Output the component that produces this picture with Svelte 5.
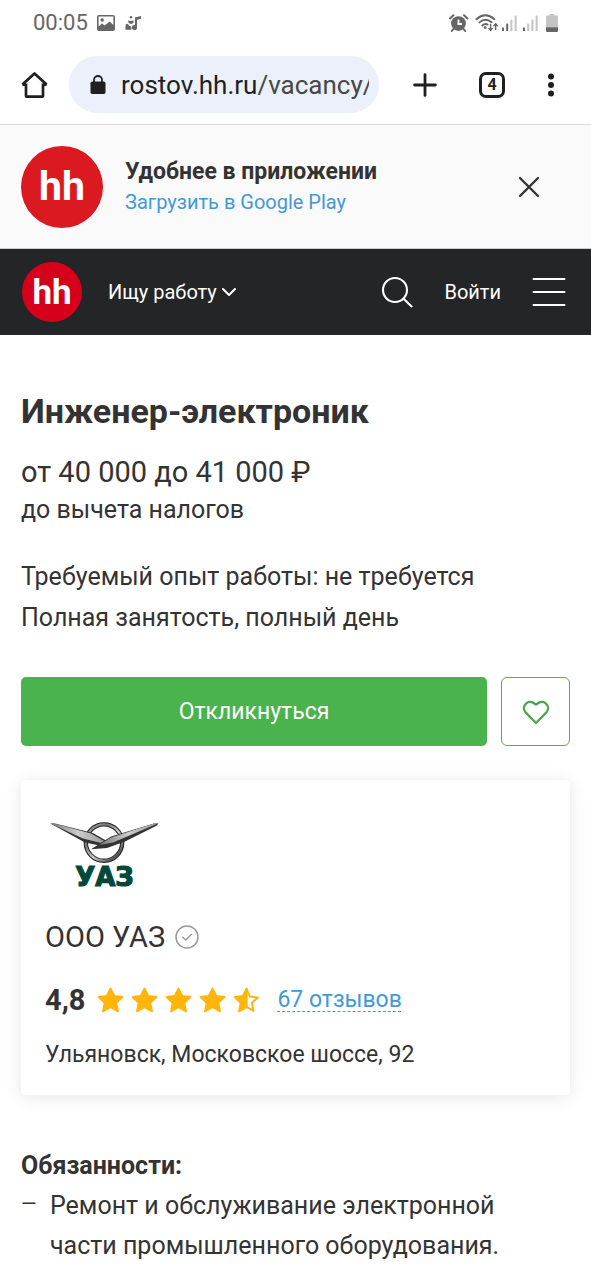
<script>
  const stars = [1, 1, 1, 1, 0.5];
  const signals = [
    ['#666', '#666', '#c4c4c4', '#c4c4c4'],
    ['#666', '#c4c4c4', '#c4c4c4', '#c4c4c4']
  ];
  let liked = $state(false);
  let bannerOpen = $state(true);
  const starPath =
    'M13 1.4 L16.8 9 L25 10 L18.9 15.8 L20.6 24.4 L13 20.2 L5.4 24.4 L7.1 15.8 L1 10 L9.2 9 Z';
</script>

<div class="page">
  <div class="status">
    <span class="time">00:05</span>
    <svg width="18" height="16" viewBox="0 0 18 16" aria-hidden="true">
      <path d="M2 0H16Q18 0 18 2V14Q18 16 16 16H2Q0 16 0 14V2Q0 0 2 0ZM1.6 1.6V11.5L5 8.6L7.6 10.6L12.6 6.6L16.4 10V1.6Z" fill="#666" fill-rule="evenodd" />
      <circle cx="5.2" cy="5" r="1.7" fill="#666" />
    </svg>
    <svg class="note" width="17" height="16" viewBox="0 0 17 16" aria-hidden="true">
      <g fill="#666">
        <path d="M10 2.4L16 1V3.8L12 4.8V12.4A2.6 2.4 0 1 1 10 10.2Z" />
        <path d="M3.2 5.2Q5.6 6.8 8.4 5.2L8.6 7.6Q6 10.4 3.4 7.6Z" />
        <path d="M0.6 9.4L3 8.8Q3.4 11.2 6.2 11.6V14.8H0.4Z" />
        <circle cx="6" cy="2.2" r="1.2" />
      </g>
    </svg>
    <span class="fill"></span>
    <svg width="20" height="18" viewBox="0 0 20 18" aria-hidden="true">
      <circle cx="9.5" cy="9.6" r="7.4" fill="#666" />
      <path d="M9.5 5.4V10H13" fill="none" stroke="#fff" stroke-width="1.8" />
      <path d="M1 4.4L4.4 1.2M15 1.2L18.4 4.4M4.4 15L2.8 17M14.6 15L16.2 17" stroke="#666" stroke-width="2" stroke-linecap="round" />
    </svg>
    <svg class="wifi" width="24" height="18" viewBox="0 0 24 18" aria-hidden="true">
      <g fill="none" stroke="#666" stroke-width="1.9" stroke-linecap="round">
        <path d="M1.4 5.2Q10.4 -2.6 19.4 5.2" />
        <path d="M4.4 8.4Q10.4 3.2 16.6 8.2" />
        <path d="M7.2 11.4Q10.2 9 12.6 10.6" />
        <path d="M15.6 10.4V16M13.8 14.4L15.6 16.4L17.4 14.4M20.6 15.6V10M18.8 11.8L20.6 9.8L22.4 11.8" stroke-width="1.4" />
      </g>
      <circle cx="10.2" cy="13.6" r="1.4" fill="#666" />
    </svg>
    {#each signals as bars}
      <svg class="signal" width="16" height="18" viewBox="0 0 16 18" aria-hidden="true">
        {#each bars as color, i}
          <rect x={i * 4.2} y={13.6 - i * 4} width="2" height={3.4 + i * 4} fill={color} />
        {/each}
      </svg>
    {/each}
    <svg width="12" height="18" viewBox="0 0 12 18" aria-hidden="true">
      <path d="M3.4 0H8.4V1.6H10.6Q12 1.6 12 3V13.4H0V3Q0 1.6 1.4 1.6H3.4Z" fill="#c4c4c4" />
      <path d="M0 13.2H12V16.8Q12 18 10.8 18H1.2Q0 18 0 16.8Z" fill="#666" />
    </svg>
  </div>

  <div class="toolbar">
    <button class="icon" aria-label="Домой">
      <svg width="28" height="28" viewBox="0 0 28 28">
        <path d="M5 12.4V24.4Q5 25.6 6.2 25.6H20.8Q22 25.6 22 24.4V12.4M1.4 13.6L13.5 2.4L25.6 13.6M1.4 13.6H5M22 13.6H25.6" fill="none" stroke="#1f1f1f" stroke-width="2.7" stroke-linejoin="round" />
      </svg>
    </button>
    <a class="address" href="#top">
      <svg width="16" height="20" viewBox="0 0 16 20" aria-hidden="true">
        <path d="M4 8V5A4 4 0 0 1 12 5V8" fill="none" stroke="#1f1f1f" stroke-width="1.8" />
        <rect x="0.5" y="6.4" width="15" height="12.6" rx="1.8" fill="#1f1f1f" />
      </svg>
      <span class="url">rostov.hh.ru<span class="path">/vacancy/</span></span>
    </a>
    <div class="tools">
      <button class="icon" aria-label="Новая вкладка">
        <svg width="24" height="24" viewBox="0 0 24 24"><path d="M12 1.6V22.4M1.6 12H22.4" stroke="#1f1f1f" stroke-width="2.8" stroke-linecap="round" /></svg>
      </button>
      <button class="tabs">4</button>
      <button class="icon" aria-label="Меню браузера">
        <svg width="8" height="24" viewBox="0 0 8 24" fill="#1f1f1f"><circle cx="4" cy="3.4" r="3" /><circle cx="4" cy="12" r="3" /><circle cx="4" cy="20.6" r="3" /></svg>
      </button>
    </div>
  </div>

  {#if bannerOpen}
    <div class="banner">
      <span class="hh big">hh</span>
      <div class="banner-text">
        <strong>Удобнее в приложении</strong>
        <a href="#app">Загрузить в Google Play</a>
      </div>
      <button class="icon" aria-label="Закрыть" onclick={() => (bannerOpen = false)}>
        <svg width="22" height="22" viewBox="0 0 22 22"><path d="M2 2L20 20M20 2L2 20" stroke="#333" stroke-width="2.4" stroke-linecap="round" /></svg>
      </button>
    </div>
  {/if}

  <nav>
    <a class="hh small" href="#home">hh</a>
    <button class="role">
      Ищу работу
      <svg width="14" height="10" viewBox="0 0 14 10"><path d="M1 2L7 8L13 2" fill="none" stroke="#fff" stroke-width="2" stroke-linecap="round" stroke-linejoin="round" /></svg>
    </button>
    <span class="fill"></span>
    <button class="icon" aria-label="Поиск">
      <svg width="32" height="32" viewBox="0 0 32 32"><g fill="none" stroke="#fff" stroke-width="2.1" stroke-linecap="round"><circle cx="14" cy="14" r="12" /><path d="M22.6 22.8L30.6 30.4" /></g></svg>
    </button>
    <a class="login" href="#login">Войти</a>
    <button class="icon" aria-label="Меню">
      <svg width="34" height="30" viewBox="0 0 34 30"><path d="M1.5 2H32.5M1.5 15H32.5M1.5 28H32.5" stroke="#fff" stroke-width="2" stroke-linecap="round" /></svg>
    </button>
  </nav>

  <main>
    <h1>Инженер-электроник</h1>
    <p class="salary">от 40 000 до 41 000 ₽</p>
    <p class="tax">до вычета налогов</p>
    <div class="terms">
      <p>Требуемый опыт работы: не требуется</p>
      <p>Полная занятость, полный день</p>
    </div>
    <div class="actions">
      <button class="apply">Откликнуться</button>
      <button class="like" aria-label="В избранное" aria-pressed={liked} onclick={() => (liked = !liked)}>
        <svg width="28" height="26" viewBox="0 0 28 26"><path d="M14 24L3.6 13.4C-1.6 7.4 6.4 -1.6 14 5.6C21.6 -1.6 29.6 7.4 24.4 13.4Z" fill={liked ? '#4bb34e' : 'none'} stroke="#4ba64e" stroke-width="2.3" stroke-linejoin="round" /></svg>
      </button>
    </div>

    <section class="card">
      <svg class="brand" width="120" height="91" viewBox="0 0 120 91" role="img" aria-label="УАЗ">
        <defs>
          <linearGradient id="ring" x1="0" y1="0" x2="1" y2="1">
            <stop offset="0" stop-color="#aaa" /><stop offset="0.3" stop-color="#777" />
            <stop offset="0.55" stop-color="#ccc" /><stop offset="0.8" stop-color="#666" /><stop offset="1" stop-color="#444" />
          </linearGradient>
          <linearGradient id="wing" x1="0" y1="0" x2="1" y2="0">
            <stop offset="0" stop-color="#777" /><stop offset="0.5" stop-color="#ccc" /><stop offset="1" stop-color="#999" />
          </linearGradient>
        </defs>
        <circle cx="59" cy="38.6" r="18.2" fill="none" stroke="#222" stroke-width="4.4" />
        <circle cx="59" cy="38.6" r="18.2" fill="none" stroke="url(#ring)" stroke-width="2.4" />
        <path d="M5.4 19.4L10 19.4L48 29L61 36.6L57 42L40 38.4Z" fill="#333" />
        <path d="M5.4 19.4L10 19.8L46 29.4L60 37.4L56 39L38 34.6Z" fill="url(#wing)" />
        <path d="M113.4 19.2L109 19.4L66 32.4L46 45.2L62 44L80 37.6L112 21.6Z" fill="#333" />
        <path d="M113.4 19.2L109 19.6L66 33.4L54 41L68 38.4Z" fill="url(#wing)" />
        <text x="59.5" y="81.5" text-anchor="middle" fill="#00483a" stroke="#00483a" stroke-width="1.2">УАЗ</text>
      </svg>
      <div class="company">
        <span>ООО УАЗ</span>
        <svg width="24" height="24" viewBox="0 0 24 24" aria-hidden="true"><g fill="none" stroke="#999" stroke-width="1.5"><circle cx="12" cy="12" r="11" /><path d="M7.2 11.8L10.8 15L16.8 9" /></g></svg>
      </div>
      <div class="rating">
        <strong>4,8</strong>
        <div class="stars">
          {#each stars as value}
            <svg width="27" height="26" viewBox="0 0 26 26" aria-hidden="true">
              {#if value === 1}
                <path d={starPath} fill="#ffb60a" stroke="#ffb60a" stroke-width="1.8" stroke-linejoin="round" />
              {:else}
                <path d="M13 2L16.4 9.6L24.4 10.4L18.3 16L20 23.8L13 19.8" fill="none" stroke="#ffb60a" stroke-width="2" stroke-linejoin="round" />
                <path d="M13.2 1.4V20.2L5.4 24.4L7.1 15.8L1 10L9.2 9Z" fill="#ffb60a" stroke="#ffb60a" stroke-width="1.8" stroke-linejoin="round" />
              {/if}
            </svg>
          {/each}
        </div>
        <a href="#reviews">67 отзывов</a>
      </div>
      <p class="place">Ульяновск, Московское шоссе, 92</p>
    </section>

    <h2>Обязанности:</h2>
    <ul>
      <li>Ремонт и обслуживание электронной части промышленного оборудования.</li>
    </ul>
  </main>
</div>

<style>
  :global(body) { margin: 0; background: #fff; }
  .page { font-family: Roboto, "Noto Sans", sans-serif; color: #333; }
  p, h1, h2, ul { margin: 0; padding: 0; }
  a { text-decoration: none; }
  svg { display: block; flex: none; }
  button { font: inherit; color: inherit; background: none; border: 0; padding: 0; cursor: pointer; }
  .fill { flex: 1; }

  .status { display: flex; align-items: center; height: 45px; padding: 0 33px; }
  .time { font-size: 22px; color: #666; margin-right: 9px; }
  .note { margin-left: 10px; }
  .wifi { margin: 0 3px 0 6px; }
  .signal { margin-right: 5px; }
  .signal + svg:last-child { margin-left: 2px; }

  .toolbar { display: flex; align-items: center; height: 79px; padding: 0 36px 0 21px; border-bottom: 1px solid #dadce0; }
  .address { flex: 1; min-width: 0; display: flex; align-items: center; gap: 15px; height: 57px; margin-left: 20px; padding: 0 10px 0 21px; border-radius: 29px; background: #ebf0fa; color: #1f1f1f; }
  .url { flex: 1; min-width: 0; overflow: hidden; white-space: nowrap; font-size: 26px; line-height: 36px; }
  .path { color: #474747; }
  .tools { display: flex; align-items: center; gap: 42px; margin-left: 34px; }
  .tabs { box-sizing: border-box; width: 26px; height: 26px; border: 3px solid #1f1f1f; border-radius: 7px; font-size: 16px; line-height: 20px; font-weight: 700; color: #1f1f1f; }

  .banner { display: flex; align-items: center; height: 124px; padding: 0 51px 0 21px; border-bottom: 1px solid #ccc; background: #fafafa; box-sizing: border-box; }
  .hh { display: flex; align-items: center; justify-content: center; flex: none; border-radius: 50%; color: #fff; font-weight: 700; line-height: 1; }
  .big { width: 82px; height: 82px; background: #da1921; font-size: 41px; }
  .small { width: 60px; height: 60px; background: #d6001c; font-size: 35px; }
  .banner-text { flex: 1; display: flex; flex-direction: column; margin-left: 22px; }
  .banner-text strong { font-size: 23px; line-height: 30px; }
  .banner-text a { font-size: 20px; line-height: 30px; color: #4299d8; }

  nav { display: flex; align-items: center; height: 86px; padding: 0 25px 0 22px; background: #232527; color: #fff; font-size: 20px; }
  .role { display: flex; align-items: center; gap: 5px; margin-left: 26px; }
  .login { color: #fff; margin: 0 31px; }

  main { padding: 55px 21px 14px; }
  h1 { font-size: 34px; line-height: 42px; font-weight: 700; }
  .salary { margin-top: 21px; font-size: 29px; line-height: 38px; }
  .tax { font-size: 25px; line-height: 38px; }
  .terms { margin-top: 27px; font-size: 25px; line-height: 41px; }
  .actions { display: flex; gap: 14px; margin-top: 39px; }
  .apply { flex: 1; height: 69px; border-radius: 5px; background: #4bb34e; color: #fff; font-size: 23px; }
  .like { display: flex; align-items: center; justify-content: center; width: 69px; height: 69px; border: 1px solid #4bb34e; border-radius: 6px; box-sizing: border-box; }

  .card { margin-top: 34px; padding: 24px; border-radius: 4px; background: #fff; box-shadow: 0 2px 18px rgba(0, 0, 0, 0.1); }
  .brand text { font: 700 26px "DejaVu Sans", sans-serif; }
  .company { display: flex; align-items: center; gap: 10px; margin-top: 24px; font-size: 29px; line-height: 36px; }
  .rating { display: flex; align-items: center; margin-top: 27px; line-height: 36px; }
  .rating strong { font-size: 29px; }
  .stars { display: flex; gap: 7px; margin: 0 17px 0 12px; }
  .rating a { font-size: 23px; color: #4299d8; text-decoration: underline dashed 1px; text-underline-offset: 4px; text-decoration-skip-ink: none; }
  .place { margin-top: 21px; font-size: 23px; line-height: 32px; }

  h2 { margin-top: 51px; font-size: 25px; line-height: 40px; font-weight: 700; }
  ul { list-style: none; padding-right: 40px; font-size: 25px; line-height: 40px; }
  li { display: flex; }
  li::before { content: "—"; flex: none; width: 29px; font-size: 20px; line-height: 36px; }
</style>
